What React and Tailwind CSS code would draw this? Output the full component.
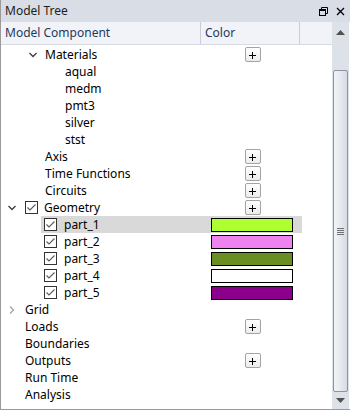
import { Fragment } from 'react'

const font = { fontFamily: '"Segoe UI", "Noto Sans", sans-serif' }

function Chevron({ open, light }) {
  return open ? (
    <svg width="10" height="10" viewBox="0 0 10 10" className="shrink-0">
      <polyline points="1.5,3 5,6.5 8.5,3" fill="none" stroke="#404040" strokeWidth="1.4" />
    </svg>
  ) : (
    <svg width="10" height="10" viewBox="0 0 10 10" className="shrink-0">
      <polyline points="3,1.5 6.5,5 3,8.5" fill="none" stroke={light ? '#a6a6a6' : '#404040'} strokeWidth="1.4" />
    </svg>
  )
}

function Check() {
  return (
    <div className="flex h-[13px] w-[13px] shrink-0 items-center justify-center border border-[#333] bg-white">
      <svg width="11" height="11" viewBox="0 0 11 11">
        <polyline points="1.5,5.5 4,8 9.5,2.5" fill="none" stroke="#5a5a5a" strokeWidth="1.1" />
      </svg>
    </div>
  )
}

function Plus() {
  return (
    <div className="flex h-[15px] w-[16px] items-center justify-center rounded-[2px] border border-[#a3a3a3] bg-gradient-to-b from-white to-[#ececec]">
      <svg width="8" height="8" viewBox="0 0 8 8">
        <path d="M0 4.5h7M3.5 1v7" stroke="#000" strokeWidth="1" />
      </svg>
    </div>
  )
}

// plain tree rows: level 1 (x=45), level 2 (x=64), level 0 (x=24)
const pads = {
  top: 'pl-[24px]',
  sub: 'pl-[44px]',
  leaf: 'pl-[64px]',
}

function Row({ label, pad, plus, lead }) {
  return (
    <div className="flex h-[17px] items-center">
      <div className={`flex w-[200px] items-center ${pads[pad]}`}>
        {lead}
        <span>{label}</span>
      </div>
      <div className="flex w-[100px] justify-center pl-[4px]">{plus && <Plus />}</div>
    </div>
  )
}

const parts = [
  { name: 'part_1', color: 'bg-[#adff2f]', sel: true },
  { name: 'part_2', color: 'bg-[#ee82ee]' },
  { name: 'part_3', color: 'bg-[#6b8e23]' },
  { name: 'part_4', color: 'bg-white' },
  { name: 'part_5', color: 'bg-[#8b008b]' },
]

function PartRow({ name, color, sel }) {
  return (
    <div className="flex h-[17px]">
      <div className="w-[40px] shrink-0" />
      <div className={`flex w-[261px] items-center ${sel ? 'bg-[#d9d9d9]' : ''}`}>
        <div className="flex w-[170px] items-center gap-[7px] pl-[3px]">
          <Check />
          <span>{name}</span>
        </div>
        <div className={`h-[14px] w-[82px] border border-black ${color}`} />
      </div>
    </div>
  )
}

export default function App() {
  return (
    <div className="flex h-[410px] w-[350px] flex-col border-b border-l border-[#9a9a9a] bg-white text-[12px] text-black" style={font}>
      <div className="flex h-[22px] shrink-0 items-center justify-between bg-[#d8dde6] pl-[4px] pr-[5px] text-[#1e1e1e]">
        <span>Model Tree</span>
        <div className="flex items-center gap-[8px]">
          <svg width="9" height="9" viewBox="0 0 9 9">
            <path d="M2.5 0.5h6v6h-2" fill="none" stroke="#000" strokeWidth="1" />
            <path d="M2.5 0.5v1.5" stroke="#000" strokeWidth="1" />
            <rect x="0.5" y="2.5" width="6" height="6" fill="none" stroke="#000" strokeWidth="1" />
            <path d="M0.5 3h6" stroke="#000" strokeWidth="2" />
          </svg>
          <svg width="9" height="9" viewBox="0 0 9 9">
            <path d="M1 1l7 7M8 1l-7 7" stroke="#000" strokeWidth="1.3" />
          </svg>
        </div>
      </div>

      <div className="flex min-h-0 flex-1">
        <div className="flex flex-1 flex-col">
          <div className="flex h-[23px] shrink-0 border-b border-[#d5dae3] bg-[#f1f3f8] text-[#1e395b]">
            <div className="flex w-[200px] items-center border-r border-[#c9ced8] pl-[4px]">Model Component</div>
            <div className="flex w-[99px] items-center border-r border-[#c9ced8] pl-[4px]">Color</div>
            <div className="flex-1" />
          </div>
          <div className="h-[1px]" />

          <Row label="Materials" pad="sub" plus lead={<span className="-ml-[17px] mr-[7px]"><Chevron open /></span>} />
          {['aqual', 'medm', 'pmt3', 'silver', 'stst'].map(m => (
            <Row key={m} label={m} pad="leaf" />
          ))}
          <Row label="Axis" pad="sub" plus />
          <Row label="Time Functions" pad="sub" plus />
          <Row label="Circuits" pad="sub" plus />
          <Row
            label="Geometry"
            pad="top"
            plus
            lead={
              <Fragment>
                <span className="-ml-[18px] mr-[8px]"><Chevron open /></span>
                <span className="mr-[6px]"><Check /></span>
              </Fragment>
            }
          />
          {parts.map(p => <PartRow key={p.name} {...p} />)}
          <Row label="Grid" pad="top" lead={<span className="-ml-[18px] mr-[8px]"><Chevron light /></span>} />
          <Row label="Loads" pad="top" plus />
          <Row label="Boundaries" pad="top" />
          <Row label="Outputs" pad="top" plus />
          <Row label="Run Time" pad="top" />
          <Row label="Analysis" pad="top" />
        </div>

        <div className="flex w-[17px] shrink-0 flex-col bg-[#dde1e8]">
          <div className="flex h-[20px] items-center justify-center">
            <svg width="9" height="5" viewBox="0 0 9 5"><path d="M0 5L4.5 0L9 5z" fill="#505050" /></svg>
          </div>
          <div className="h-[28px]" />
          <div className="mx-[1px] flex flex-1 items-center justify-center rounded-[2px] border border-[#8e949c] bg-gradient-to-r from-[#f1f3f7] via-[#e6e9ef] to-[#d7dbe3]">
            <div className="flex flex-col gap-[1px]">
              <div className="h-[1px] w-[7px] bg-[#707070]" />
              <div className="h-[1px] w-[7px] bg-[#707070]" />
              <div className="h-[1px] w-[7px] bg-[#707070]" />
              <div className="h-[1px] w-[7px] bg-[#707070]" />
            </div>
          </div>
          <div className="flex h-[17px] items-center justify-center">
            <svg width="9" height="5" viewBox="0 0 9 5"><path d="M0 0L4.5 5L9 0z" fill="#505050" /></svg>
          </div>
        </div>
        <div className="w-[1px] shrink-0 bg-white" />
      </div>
    </div>
  )
}
